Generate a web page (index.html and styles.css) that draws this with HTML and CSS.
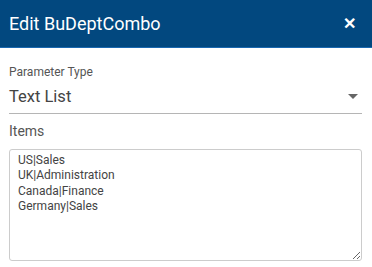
FILE: index.html
```html
<!DOCTYPE html>
<html lang="en">
<head>
<meta charset="UTF-8">
<meta name="viewport" content="width=device-width, initial-scale=1.0">
<title>Edit BuDeptCombo</title>
<link rel="stylesheet" href="styles.css">
</head>
<body>

<div class="dialog">
    <div class="dialog-header">
        <span class="dialog-title">Edit BuDeptCombo</span>
        <span class="dialog-close">&#x2715;</span>
    </div>

    <div class="dialog-body">
        <div class="field">
            <div class="field-label">Parameter Type</div>
            <div class="select">
                <span class="select-value">Text List</span>
                <span class="select-arrow"></span>
            </div>
        </div>

        <div class="field">
            <div class="field-label items-label">Items</div>
            <textarea class="items">US|Sales
UK|Administration
Canada|Finance
Germany|Sales</textarea>
        </div>
    </div>
</div>

</body>
</html>
```

FILE: styles.css
```css
body {
    margin: 0;
    font-family: Roboto, "Liberation Sans", sans-serif;
    background-color: #ffffff;
}
.dialog {
    width: 372px;
    height: 267px;
    background-color: #ffffff;
}
.dialog-header {
    height: 47px;
    background-color: #02487f;
    border-bottom: 1px solid #1a68b0;
    display: flex;
    align-items: center;
    justify-content: space-between;
    padding: 0 16px 0 9px;
    color: #ffffff;
}
.dialog-title {
    font-size: 18px;
}
.dialog-close {
    font-size: 16px;
    font-weight: bold;
}
.dialog-body {
    padding: 17px 10px 0 9px;
}
.field-label {
    font-size: 12px;
    color: #555555;
}
.select {
    display: flex;
    align-items: center;
    justify-content: space-between;
    height: 34px;
    border-bottom: 1px solid #b5b5b5;
    color: #444444;
}
.select-value {
    font-size: 16.5px;
    padding-top: 1px;
}
.select-arrow {
    width: 0;
    height: 0;
    border-left: 5px solid transparent;
    border-right: 5px solid transparent;
    border-top: 5px solid #666666;
    margin-right: 4px;
}
.items-label {
    font-size: 14px;
    margin-top: 9px;
    margin-bottom: 10px;
}
.items {
    display: block;
    box-sizing: border-box;
    width: 100%;
    height: 112px;
    border: 1px solid #cccccc;
    border-radius: 3px;
    padding: 3px 8px;
    font-family: Roboto, "Liberation Sans", sans-serif;
    font-size: 12px;
    line-height: 15.3px;
    color: #444444;
    resize: vertical;
    outline: none;
}
```
